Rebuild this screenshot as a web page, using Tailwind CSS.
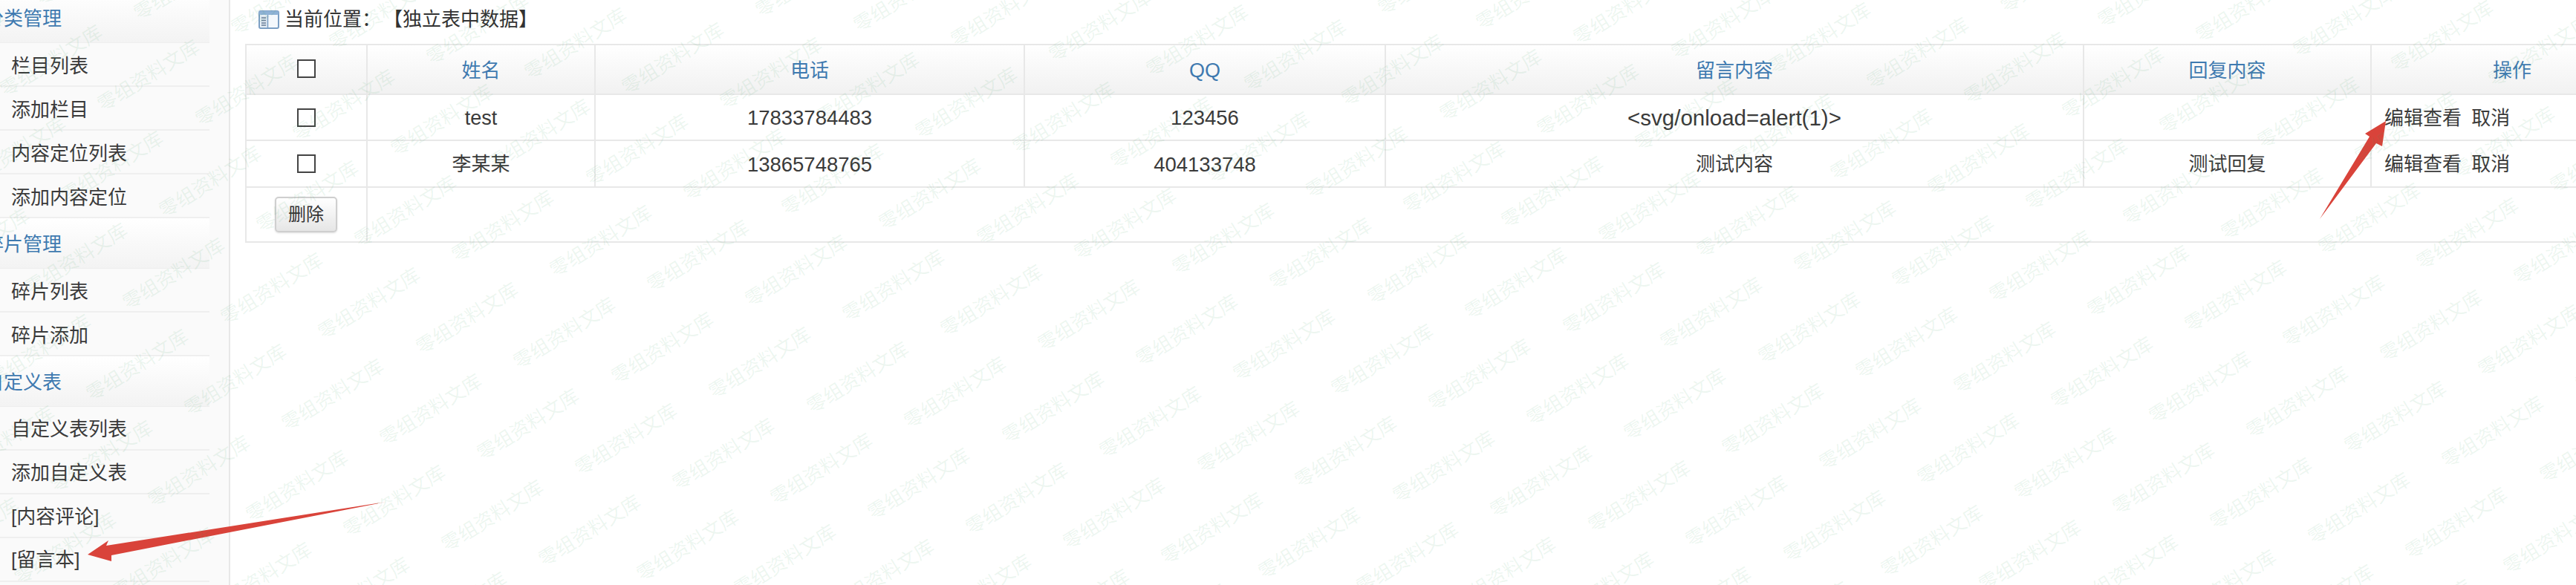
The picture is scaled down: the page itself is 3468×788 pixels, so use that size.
<!DOCTYPE html>
<html lang="zh-CN">
<head>
  <meta charset="UTF-8" />
  <title>独立表中数据</title>
  <script src="https://cdn.jsdelivr.net/npm/@tailwindcss/browser@4"></script>
</head>
<body class="bg-white text-[#3a3a3a] text-[26px] font-['Liberation_Sans','Noto_Sans_CJK_SC',sans-serif]">

  <div id="page" class="relative flex w-[3468px] h-[788px] overflow-hidden">

    <!-- SIDEBAR -->
    <aside class="w-[310px] h-full shrink-0 bg-[#fafafa] border-r-2 border-[#e8e8e8] overflow-hidden">
      <ul class="w-[282px] -mt-[10px]">
        <li class="h-[68px] flex items-center pt-[4px] bg-gradient-to-b from-white to-[#f3f3f3] border-b border-[#eeeeee] text-[#3f7ab0] overflow-hidden"><span class="-ml-[21px] whitespace-nowrap">分类管理</span></li>
        <li class="h-[59px] flex items-center pt-[5px] pl-[15px] border-b-2 border-[#efefef]">栏目列表</li>
        <li class="h-[59px] flex items-center pt-[5px] pl-[15px] border-b-2 border-[#efefef]">添加栏目</li>
        <li class="h-[59px] flex items-center pt-[5px] pl-[15px] border-b-2 border-[#efefef]">内容定位列表</li>
        <li class="h-[59px] flex items-center pt-[5px] pl-[15px] border-b-2 border-[#efefef]">添加内容定位</li>
        <li class="h-[68px] flex items-center pt-[4px] bg-gradient-to-b from-white to-[#f3f3f3] border-b border-[#eeeeee] text-[#3f7ab0] overflow-hidden"><span class="-ml-[21px] whitespace-nowrap">碎片管理</span></li>
        <li class="h-[59px] flex items-center pt-[5px] pl-[15px] border-b-2 border-[#efefef]">碎片列表</li>
        <li class="h-[59px] flex items-center pt-[5px] pl-[15px] border-b-2 border-[#efefef]">碎片添加</li>
        <li class="h-[68px] flex items-center pt-[4px] bg-gradient-to-b from-white to-[#f3f3f3] border-b border-[#eeeeee] text-[#3f7ab0] overflow-hidden"><span class="-ml-[21px] whitespace-nowrap">自定义表</span></li>
        <li class="h-[59px] flex items-center pt-[4px] pl-[15px] border-b-2 border-[#efefef]">自定义表列表</li>
        <li class="h-[59px] flex items-center pt-[4px] pl-[15px] border-b-2 border-[#efefef]">添加自定义表</li>
        <li class="h-[59px] flex items-center pt-[3px] pl-[15px] border-b-2 border-[#efefef]">[内容评论]</li>
        <li class="h-[59px] flex items-center pt-[2px] pl-[15px] border-b-2 border-[#efefef]">[留言本]</li>
      </ul>
    </aside>

    <!-- MAIN -->
    <main class="flex-1 pl-[20px] min-w-0">
      <div class="h-[59px] flex items-center gap-[7px] pl-[18px] pb-[6px] text-[#333]">
        <svg class="w-[28px] h-[25px]" viewBox="0 0 28 25">
          <rect x="1" y="1" width="26" height="23" rx="2" fill="#f4f8fc" stroke="#7c9fc4" stroke-width="2" />
          <rect x="1" y="1" width="26" height="5" rx="2" fill="#8fb2d6" />
          <rect x="3" y="7" width="9" height="15" fill="#dce6f0" />
          <path d="M12.5 6v17" stroke="#7c9fc4" stroke-width="1.5" />
          <path d="M4 10h6M4 13.500h6M4 17h6M4 20h6" stroke="#6b7f96" stroke-width="1.500" />
        </svg>
        <span class="whitespace-pre">当前位置：<span class="ml-[16px]">【独立表中数据】</span></span>
      </div>

      <table class="table-fixed w-[3241px] border-collapse text-center">
        <colgroup>
          <col class="w-[163px]" />
          <col class="w-[307px]" />
          <col class="w-[578px]" />
          <col class="w-[486px]" />
          <col class="w-[940px]" />
          <col class="w-[387px]" />
          <col class="w-[380px]" />
        </colgroup>
        <thead>
          <tr class="h-[67px] bg-gradient-to-b from-white to-[#f1f1f1] text-[#3f7ab0]">
            <th class="border-2 border-[#e8e8e8] font-normal"><input type="checkbox" class="appearance-none block mx-auto w-[25px] h-[25px] bg-white border-2 border-[#444] -mt-[2px]" /></th>
            <th class="border-2 border-[#e8e8e8] font-normal pt-[3px]">姓名</th>
            <th class="border-2 border-[#e8e8e8] font-normal pt-[3px]">电话</th>
            <th class="border-2 border-[#e8e8e8] font-normal pt-[3px] text-[27px]">QQ</th>
            <th class="border-2 border-[#e8e8e8] font-normal pt-[3px]">留言内容</th>
            <th class="border-2 border-[#e8e8e8] font-normal pt-[3px]">回复内容</th>
            <th class="border-2 border-[#e8e8e8] font-normal pt-[3px]">操作</th>
          </tr>
        </thead>
        <tbody>
          <tr class="h-[62px]">
            <td class="border-2 border-[#e8e8e8]"><input type="checkbox" class="appearance-none block mx-auto w-[25px] h-[25px] bg-white border-2 border-[#444]" /></td>
            <td class="border-2 border-[#e8e8e8] text-[27px] pt-[2px]">test</td>
            <td class="border-2 border-[#e8e8e8] text-[27.500px] pt-[2px]">17833784483</td>
            <td class="border-2 border-[#e8e8e8] text-[27.500px] pt-[2px]">123456</td>
            <td class="border-2 border-[#e8e8e8] text-[29.500px] pt-[2px]">&lt;svg/onload=alert(1)&gt;</td>
            <td class="border-2 border-[#e8e8e8]"></td>
            <td class="border-2 border-[#e8e8e8] text-left pl-[17px] pt-[2px] whitespace-pre">编辑查看 <span class="ml-[6px]">取消</span></td>
          </tr>
          <tr class="h-[63px]">
            <td class="border-2 border-[#e8e8e8]"><input type="checkbox" class="appearance-none block mx-auto w-[25px] h-[25px] bg-white border-2 border-[#444]" /></td>
            <td class="border-2 border-[#e8e8e8] pt-[2px]">李某某</td>
            <td class="border-2 border-[#e8e8e8] text-[27.500px] pt-[2px]">13865748765</td>
            <td class="border-2 border-[#e8e8e8] text-[27.500px] pt-[2px]">404133748</td>
            <td class="border-2 border-[#e8e8e8] pt-[2px]">测试内容</td>
            <td class="border-2 border-[#e8e8e8] pt-[2px]">测试回复</td>
            <td class="border-2 border-[#e8e8e8] text-left pl-[17px] pt-[2px] whitespace-pre">编辑查看 <span class="ml-[6px]">取消</span></td>
          </tr>
          <tr class="h-[74px]">
            <td class="border-2 border-[#e8e8e8]">
              <button class="block ml-[38px] w-[84px] h-[48px] rounded-[5px] border-2 border-[#cfcfcf] bg-gradient-to-b from-white to-[#e6e6e6] text-[24px] text-[#333] shadow-sm">删除</button>
            </td>
            <td colspan="6" class="border-2 border-[#e8e8e8]"></td>
          </tr>
        </tbody>
      </table>
    </main>

    <!-- red annotation arrows -->
    <svg class="absolute inset-0 w-[3468px] h-[788px] pointer-events-none" viewBox="0 0 3468 788">
      <polygon fill="#d9433a" points="118,747 146,728 143,735 520,676 150,748 150,756" />
      <polygon fill="#d9433a" points="3212,163 3184,180 3190,184 3123,295 3199,193 3207,197" />
    </svg>

    <!-- watermark -->
    <div id="watermark" class="absolute inset-0 pointer-events-none overflow-hidden"></div>
  </div>

<script>
const watermark = document.getElementById('watermark');
for (let i = -12; i < 34; i++) {
  for (let j = -6; j < 12; j++) {
    const x = 200 + i * 131.5 - j * 48.7;
    const y = 102 + i * 20 + j * 123.3;
    if (x < -100 || x > 3570 || y < -100 || y > 890) continue;
    const mark = document.createElement('span');
    mark.className = 'absolute -translate-x-1/2 -translate-y-1/2 -rotate-[32deg] whitespace-nowrap text-[26px] leading-none text-[#3f9f5f]/10';
    mark.style.left = x + 'px';
    mark.style.top = y + 'px';
    mark.textContent = '零组资料文库';
    watermark.appendChild(mark);
  }
}
</script>
</body>
</html>
